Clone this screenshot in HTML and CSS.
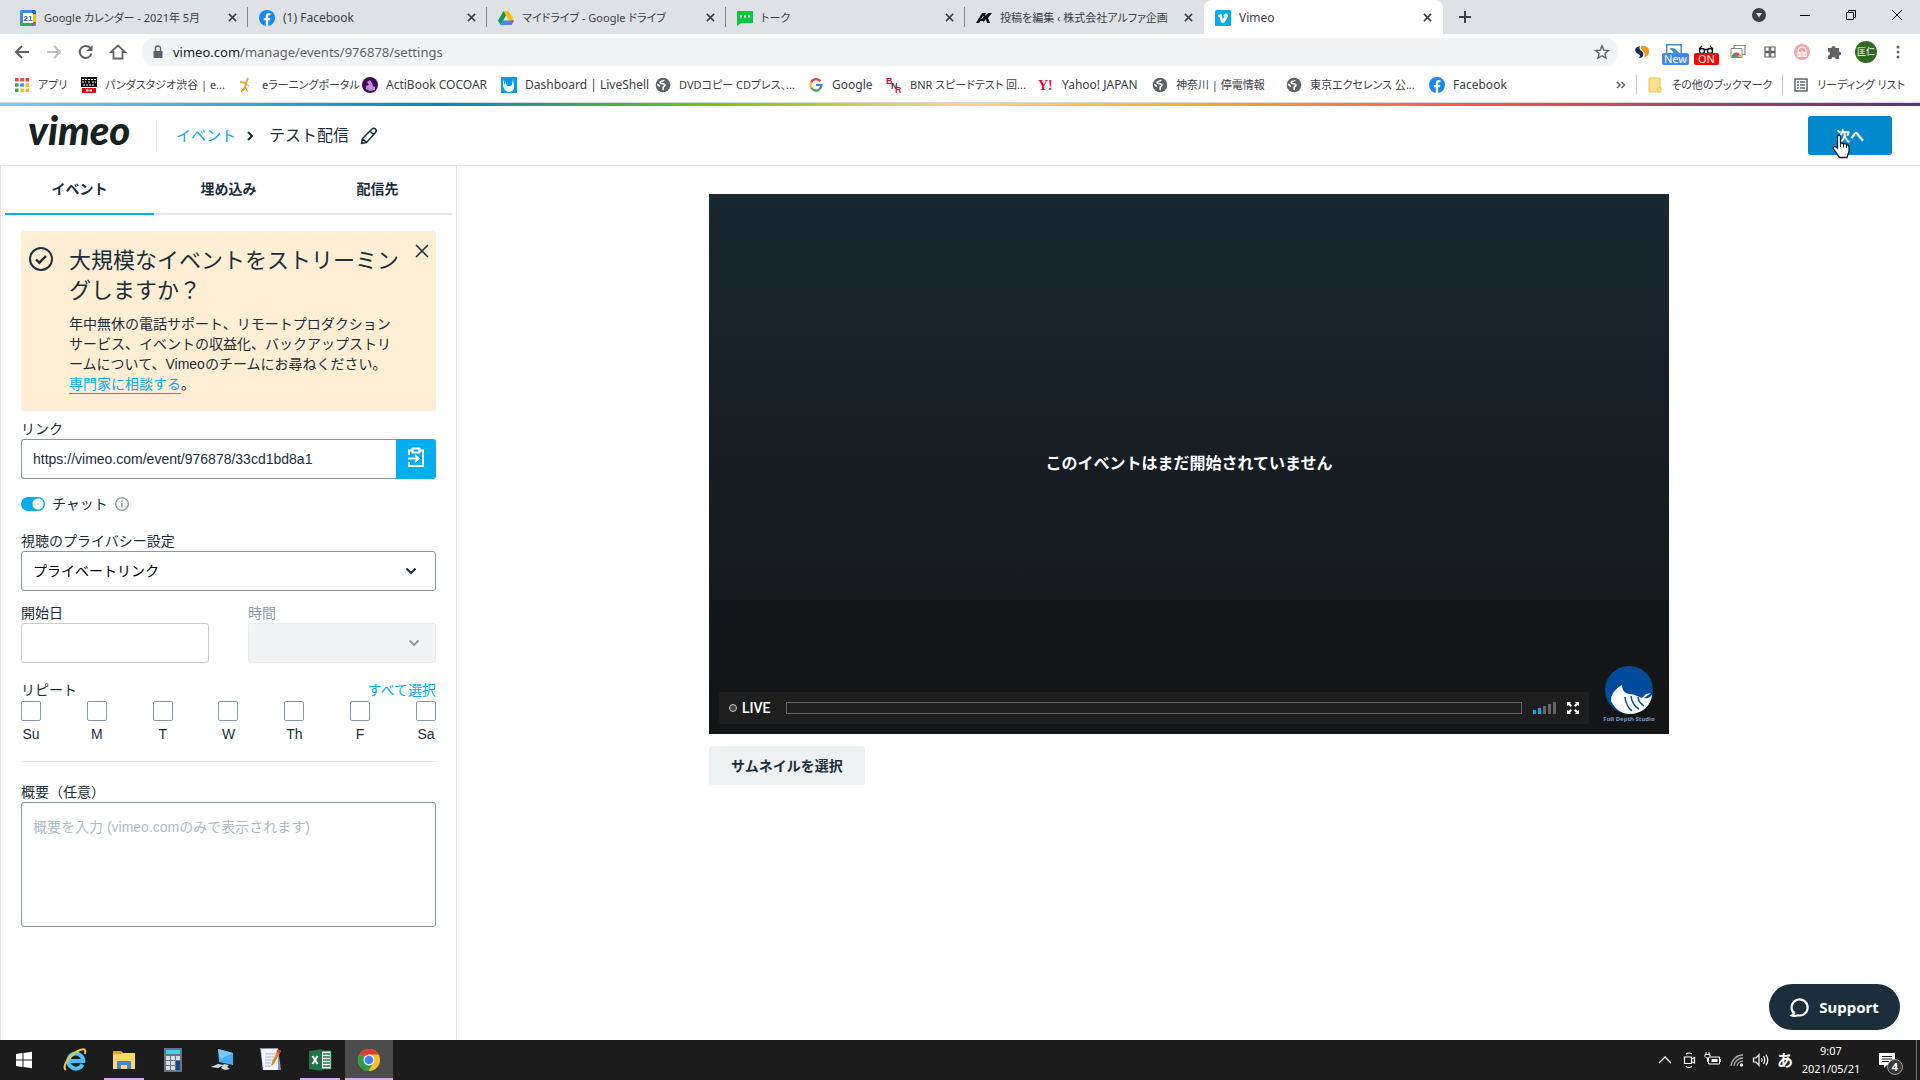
FILE: index.html
```html
<!DOCTYPE html>
<html lang="ja">
<head>
<meta charset="utf-8">
<title>Vimeo</title>
<link rel="stylesheet" href="styles.css">
</head>
<body>
<svg class="defs" aria-hidden="true">
  <symbol id="x" viewBox="0 0 10 10"><path d="M1 1l8 8M9 1L1 9" fill="none" stroke="currentColor" stroke-width="1.7"/></symbol>
  <symbol id="fb" viewBox="0 0 16 16"><circle cx="8" cy="8" r="8" fill="#1287f5"/><path d="M6.8 16V10.300H4.800V8h2V6.300c0-2 1.200-3.200 3-3.200l1.700.2v1.900h-1c-1 0-1.300.6-1.300 1.200V8h2.200l-.4 2.300H9.200V16z" fill="#fff"/></symbol>
  <symbol id="globe" viewBox="0 0 16 16"><circle cx="8" cy="8" r="7.300" fill="#5f6368"/><path d="M9 3c-.6 1.600-3.600 1-4 2.500.1 1.600 4.500.7 5 2.500.3 1.200-1.600 1.200-1.800 2.300-.1 1 .3 1.600-.2 2.700M2 7.500c1.500.2 2.300.8 2.400 2.200" fill="none" stroke="#fff" stroke-width="1.600"/></symbol>
  <symbol id="chev" viewBox="0 0 12 8"><path d="M1.500 1.500L6 6l4.500-4.500" fill="none" stroke="currentColor" stroke-width="2"/></symbol>
</svg>

<header class="chrome">
  <nav class="tabstrip" aria-label="タブ">
    <div class="tab"><svg viewBox="0 0 16 16"><rect width="16" height="16" rx="1.500" fill="#4285f4"/><path d="M0 12h12v4H1.500L0 14.500z" fill="#34a853"/><path d="M12 4h4v8h-4z" fill="#fbbc04"/><path d="M12 12h4l-4 4z" fill="#ea4335"/><path d="M12 0h2.500L16 1.500V4h-4z" fill="#1967d2"/><rect x="3" y="3" width="10" height="10" fill="#fff"/><text x="8" y="11" text-anchor="middle" class="cal-num">21</text></svg><span class="jp">Google カレンダー - 2021年 5月</span><button aria-label="閉じる"><svg><use href="#x"/></svg></button></div>
    <div class="tab"><svg><use href="#fb"/></svg><span>(1) Facebook</span><button aria-label="閉じる"><svg><use href="#x"/></svg></button></div>
    <div class="tab"><svg viewBox="0 0 16 16"><path d="M5.500 1h5L16 10.500h-5z" fill="#fbbc04"/><path d="M5.500 1L0 10.500 2.600 15 8 5.500z" fill="#0f9d58"/><path d="M5.200 10.500H16L13.400 15H2.600z" fill="#4285f4"/><path d="M12.800 10.500H16L13.400 15z" fill="#ea4335"/></svg><span class="jp">マイドライブ - Google ドライブ</span><button aria-label="閉じる"><svg><use href="#x"/></svg></button></div>
    <div class="tab"><svg viewBox="0 0 16 16"><path d="M0 1h16v12H4l-4 3z" fill="#06c93c"/><path d="M3 5.500h2v2H3zM7 5.500h2v2H7zM11 5.500h2v2h-2z" fill="#fff"/></svg><span class="jp">トーク</span><button aria-label="閉じる"><svg><use href="#x"/></svg></button></div>
    <div class="tab"><svg viewBox="0 0 16 16"><path d="M0 13L6 3h4l-1 3 3-3h4l-4 5 2 5h-3l-1-4-3 4H7l.5-2h-3L3 13z" fill="#111"/><path d="M5.500 9l2-3" stroke="#dee1e6"/></svg><span class="jp">投稿を編集 ‹ 株式会社アルファ企画</span><button aria-label="閉じる"><svg><use href="#x"/></svg></button></div>
    <div class="tab active"><svg viewBox="0 0 16 16"><rect width="16" height="16" rx="1.500" fill="#00adef"/><path d="M3 5.500c2-2 3.500-2.300 4 0l.7 3.500C9 8 9.600 6 8.500 6c.5-2 2-2.800 3.500-2.300C14.500 5 11 12 8 13c-2 .4-2.300-1.500-3-5-.3-1.300-.7-1.500-1.500-1z" fill="#fff"/></svg><span>Vimeo</span><button aria-label="閉じる"><svg><use href="#x"/></svg></button></div>
    <button class="newtab" aria-label="新しいタブ"><svg viewBox="0 0 12 12"><path d="M6 0v12M0 6h12" stroke="#3c4043" stroke-width="2"/></svg></button>
    <div class="winctl">
      <button aria-label="タブを検索"><svg viewBox="0 0 14 14"><circle cx="7" cy="7" r="7" fill="#3c4043"/><path d="M4 5h6L7 9.500z" fill="#dee1e6"/></svg></button>
      <button aria-label="最小化"><svg viewBox="0 0 14 14"><path d="M2 7.500h10" stroke="#000"/></svg></button>
      <button aria-label="元に戻す"><svg viewBox="0 0 14 14"><path d="M2.500 4.500h7v7h-7zM4.500 4.500v-2h7v7h-2" fill="none" stroke="#000"/></svg></button>
      <button aria-label="閉じる"><svg viewBox="0 0 14 14"><path d="M2 2l10 10M12 2L2 12" stroke="#000"/></svg></button>
    </div>
  </nav>

  <div class="toolbar">
    <button aria-label="戻る"><svg viewBox="0 0 16 16"><path d="M15 8H2M8 2L2 8l6 6" fill="none" stroke="#5f6368" stroke-width="2"/></svg></button>
    <button aria-label="進む"><svg viewBox="0 0 16 16"><path d="M1 8h13M8 2l6 6-6 6" fill="none" stroke="#bcbfc3" stroke-width="2"/></svg></button>
    <button aria-label="再読み込み"><svg viewBox="0 0 16 16"><path d="M13.500 9.500a6 6 0 1 1-1.300-5.600L13.500 5" fill="none" stroke="#5f6368" stroke-width="2"/><path d="M14.500 1v6h-6z" fill="#5f6368"/></svg></button>
    <button aria-label="ホーム"><svg viewBox="0 0 16 16"><path d="M1 8l7-6.500L15 8h-2.500v6.500h-9V8z" fill="none" stroke="#5f6368" stroke-width="1.800"/></svg></button>
    <div class="omnibox">
      <svg viewBox="0 0 16 16"><path d="M3.500 7h9v7h-9z" fill="#5f6368"/><path d="M5.500 7V4.500a2.500 2.500 0 0 1 5 0V7" fill="none" stroke="#5f6368" stroke-width="1.500"/></svg>
      <span class="url"><b>vimeo.com</b>/manage/events/976878/settings</span>
      <svg class="star" viewBox="0 0 16 16"><path d="M8 1.800l1.800 4.300 4.700.4-3.600 3 1.100 4.600L8 11.700 4 14.100l1.100-4.600-3.600-3 4.700-.4z" fill="none" stroke="#5f6368" stroke-width="1.400"/></svg>
    </div>
    <div class="exts">
      <svg viewBox="0 0 16 16"><path d="M6 2C2 3 0 5 2 8c1 2 4 2 4 4l-1 2c3 0 5-2 4-5S4 6 6 2z" fill="#1b2a56"/><path d="M7 2c5-1 9 2 8 7-1 3-3 4-5 4 2-4 0-5-2-7-1-1-1.500-3-1-4z" fill="#f7941d"/></svg>
      <div class="ext"><svg viewBox="0 0 16 16"><path d="M0 0h16v14H0z" fill="#4b8bbd"/><path d="M1.500 1.500h13v10h-13z" fill="#fff"/><path d="M3 5c5-3 7 1 11 4v2H8C7 7 6 6 3 5z" fill="#3d8ec9"/></svg><em class="new">New</em></div>
      <div class="ext"><svg viewBox="0 0 16 16"><path d="M1 5L4 2M15 5l-3-3M1 5.500h14" fill="none" stroke="#111" stroke-width="1.300"/><circle cx="4" cy="7" r="2.500" fill="#fff" stroke="#111" stroke-width="1.400"/><circle cx="12" cy="7" r="2.500" fill="#fff" stroke="#111" stroke-width="1.400"/></svg><em class="on">ON</em></div>
      <svg viewBox="0 0 16 16"><path d="M4 4V1.500h11v9h-3" fill="none" stroke="#888" stroke-width="1.200"/><path d="M1 4.500h11v9H1z" fill="#fff" stroke="#888"/><path d="M2 13a4.500 4.500 0 0 1 9 0z" fill="#ea4335"/><path d="M2 13a4.500 4.500 0 0 1 2.200-3.900L6.500 13z" fill="#34a853"/><path d="M11 13a4.500 4.500 0 0 0-1-3L6.500 13z" fill="#fbbc04"/><circle cx="6.500" cy="12" r="1.800" fill="#4285f4"/></svg>
      <svg viewBox="0 0 16 16"><path d="M3 3h4.300v4.300H3zM8.700 3H13v4.300H8.700zM3 8.700h4.300V13H3zM8.700 8.700H13V13H8.700z" fill="none" stroke="#5f6368" stroke-width="1.200"/></svg>
      <svg viewBox="0 0 16 16"><circle cx="8" cy="8" r="8" fill="#f3a6a6"/><path d="M4 9V7a4 4 0 0 1 8 0v2M4 8.500h2v4H4zM10 8.500h2v4h-2zM8 7v6" fill="none" stroke="#fff" stroke-width="1.200"/></svg>
      <svg viewBox="0 0 16 16"><path d="M2 4h3.500a2 2 0 1 1 4 0H13v3.500a2 2 0 1 1 0 4V15H9.500a2 2 0 1 0-4 0H2v-3.500a2 2 0 1 0 0-4z" fill="#5f6368"/></svg>
      <span class="avatar">匡仁</span>
      <svg viewBox="0 0 16 16"><circle cx="8" cy="3" r="1.500" fill="#5f6368"/><circle cx="8" cy="8" r="1.500" fill="#5f6368"/><circle cx="8" cy="13" r="1.500" fill="#5f6368"/></svg>
    </div>
  </div>

  <nav class="bookbar" aria-label="ブックマーク">
    <div class="bookmarks">
      <a href="#"><svg viewBox="0 0 16 16"><path d="M1 1h3.500v3.500H1zM6.300 1h3.500v3.500H6.300zM11.500 1H15v3.500h-3.500z" fill="#ea4335"/><path d="M1 6.300h3.500v3.500H1z" fill="#34a853"/><path d="M6.300 6.300h3.500v3.500H6.300z" fill="#4285f4"/><path d="M11.500 6.300H15v3.500h-3.500z" fill="#fbbc04"/><path d="M1 11.500h3.500V15H1z" fill="#34a853"/><path d="M6.300 11.500h3.500V15H6.300zM11.500 11.500H15V15h-3.500z" fill="#fbbc04"/></svg><span class="jp">アプリ</span></a>
      <a href="#"><svg viewBox="0 0 16 16"><path d="M0 0h16v10H0z" fill="#111"/><path d="M1 2.500h14M1 5h4M7 5h2M11 5h4M2 8h12" stroke="#fff" stroke-width="1.200" stroke-dasharray="2 1"/><path d="M1 11h14v5H1z" fill="#e60012"/><path d="M5 13.500h6" stroke="#fff" stroke-width="2" stroke-dasharray="2.500 1"/></svg><span class="jp">パンダスタジオ渋谷 | e...</span></a>
      <a href="#"><svg viewBox="0 0 16 16"><path d="M10 1L8 6 2 5M8 6l-1 5-4 4" fill="none" stroke="#eba937" stroke-width="2"/><path d="M8 7l3 2M7 10l3 5" fill="none" stroke="#d9822b"/></svg><span class="jp">eラーニングポータル</span></a>
      <a href="#"><svg viewBox="0 0 16 16"><circle cx="8" cy="8" r="8" fill="#3f0d55"/><path d="M4 12V9l3-1-2-3 3-2 2 3 1 3 2 1v3l-5 1z" fill="#c58be0"/></svg><span>ActiBook COCOAR</span></a>
      <a href="#"><svg viewBox="0 0 16 16"><path d="M0 0h16v16H0z" fill="#0a9be8"/><path d="M2 2l2 7V4l2 5h3l2-1 1-6 1 6v3q-1 4-5 4t-6-6z" fill="#fff"/></svg><span>Dashboard | LiveShell</span></a>
      <a href="#"><svg><use href="#globe"/></svg><span class="jp">DVDコピー CDプレス、...</span></a>
      <a href="#"><svg viewBox="0 0 16 16"><path d="M12.500 4.200A5.500 5.500 0 0 0 3.200 5.300" fill="none" stroke="#ea4335" stroke-width="2.200"/><path d="M3.200 5.300a6 6 0 0 0 0 5.400" fill="none" stroke="#fbbc04" stroke-width="2.200"/><path d="M3.200 10.700A5.500 5.500 0 0 0 11.500 12.300" fill="none" stroke="#34a853" stroke-width="2.200"/><path d="M8 8h5.500a6 6 0 0 1-2 4.300" fill="none" stroke="#4285f4" stroke-width="2.200"/></svg><span>Google</span></a>
      <a href="#"><svg viewBox="0 0 16 16" class="bnr"><text x="0" y="7" fill="#c1123b">B</text><text x="5" y="12" fill="#333">N</text><text x="9" y="16" fill="#c1123b">R</text></svg><span class="jp">BNR スピードテスト 回...</span></a>
      <a href="#"><svg viewBox="0 0 16 16" class="yj"><text x="0" y="13" fill="#f03">Y!</text></svg><span>Yahoo! JAPAN</span></a>
      <a href="#"><svg><use href="#globe"/></svg><span class="jp">神奈川 | 停電情報</span></a>
      <a href="#"><svg><use href="#globe"/></svg><span class="jp">東京エクセレンス 公...</span></a>
      <a href="#"><svg><use href="#fb"/></svg><span>Facebook</span></a>
    </div>
    <div class="bookmore">
      <button aria-label="その他"><svg viewBox="0 0 10 8"><path d="M1 1l3 3-3 3M5.500 1l3 3-3 3" fill="none" stroke="#5f6368" stroke-width="1.500"/></svg></button>
      <a href="#"><svg viewBox="0 0 16 16"><path d="M2 1h11v14H2z" fill="#fde08d" stroke="#e8c45a"/><path d="M11 10h3v5h-3z" fill="#fde08d" stroke="#e8c45a"/></svg><span class="jp">その他のブックマーク</span></a>
      <a href="#"><svg viewBox="0 0 16 16"><path d="M2 2h12v12H2z" fill="none" stroke="#5f6368" stroke-width="1.500"/><path d="M4 5h2M7 5h5M4 8h2M7 8h5M4 11h2M7 11h5" stroke="#5f6368" stroke-width="1.400"/></svg><span class="jp">リーディング リスト</span></a>
    </div>
  </nav>
</header>

<div class="rainbow"></div>
<header class="topbar">
  <a class="logo" href="#">vimeo</a>
  <nav class="crumbs" aria-label="パンくず">
    <a href="#">イベント</a>
    <svg class="crumb-sep" viewBox="0 0 8 10"><path d="M2 1l4 4-4 4" fill="none" stroke="#1a2e3b" stroke-width="2"/></svg>
    <h1>テスト配信</h1>
    <button aria-label="編集"><svg viewBox="0 0 18 18"><path d="M1.500 16.500l1-5L12 2q2-1.500 3.500 0t0 3.500L6.500 15.500zM10 4l4 4M2.500 11.500l4 4" fill="none" stroke="#1a2e3b" stroke-width="1.500" stroke-linejoin="round"/></svg></button>
  </nav>
  <div class="next">
    <button>次へ</button>
    <svg class="cursor" viewBox="0 0 18 25"><path d="M5.500 14V3q0-2 1.500-2t1.500 2v6l5 .8q3.500.5 3.500 3.500v4l-2 6.200H7.500l-5-7q-2-3-.5-3.800T5.500 14z" fill="#fff" stroke="#10202c" stroke-width="1.300"/><path d="M8.500 9v4M11.500 9.500v4M14.500 10v4" stroke="#10202c"/></svg>
  </div>
</header>

<main class="main">
  <aside class="side">
    <nav class="sidetabs"><a class="on" href="#">イベント</a><a href="#">埋め込み</a><a href="#">配信先</a></nav>
    <form class="form">
      <section class="notice">
        <svg class="check" viewBox="0 0 24 24"><circle cx="12" cy="12" r="11" fill="none" stroke="#1a2e3b" stroke-width="2"/><path d="M7 12.500l3.300 3.200L17 9" fill="none" stroke="#1a2e3b" stroke-width="2.400"/></svg>
        <div class="notice-text">
          <h2>大規模なイベントをストリーミングしますか？</h2>
          <p>年中無休の電話サポート、リモートプロダクションサービス、イベントの収益化、バックアップストリームについて、Vimeoのチームにお尋ねください。 <a href="#">専門家に相談する</a>。</p>
        </div>
        <button type="button" class="notice-close" aria-label="閉じる"><svg viewBox="0 0 12 12"><path d="M0 0l12 12M12 0L0 12" stroke="#1a2e3b" stroke-width="1.500"/></svg></button>
      </section>

      <label for="link">リンク</label>
      <div class="copy"><input id="link" type="text" value="https://vimeo.com/event/976878/33cd1bd8a1"><button type="button" aria-label="コピー"><svg viewBox="0 0 16 20"><path d="M1 8V3.500h3M12 3.500h3V19H1v-4" fill="none" stroke="#fff" stroke-width="2"/><path d="M4.500 1.500h7v4h-7z" fill="none" stroke="#fff" stroke-width="2" stroke-linejoin="round"/><path d="M0 11.500h10M7 8l3.700 3.500L7 15" fill="none" stroke="#fff" stroke-width="1.800"/></svg></button></div>

      <div class="chat">
        <input id="chat" type="checkbox" checked><label for="chat">チャット</label>
        <svg viewBox="0 0 14 14"><circle cx="7" cy="7" r="6.300" fill="none" stroke="#8699a6" stroke-width="1.300"/><path d="M7 6v4.500M7 3.500v1.400" stroke="#8699a6" stroke-width="1.500"/></svg>
      </div>

      <label for="privacy">視聴のプライバシー設定</label>
      <div class="pick"><select id="privacy"><option>プライベートリンク</option></select><svg><use href="#chev"/></svg></div>

      <div class="when">
        <div><label for="date">開始日</label><input id="date" type="text"></div>
        <div class="off"><label for="time">時間</label><div class="pick"><select id="time" disabled><option></option></select><svg><use href="#chev"/></svg></div></div>
      </div>

      <div class="repeat"><span>リピート</span><a href="#">すべて選択</a></div>
      <div class="days">
        <label><input type="checkbox">Su</label><label><input type="checkbox">M</label><label><input type="checkbox">T</label><label><input type="checkbox">W</label><label><input type="checkbox">Th</label><label><input type="checkbox">F</label><label><input type="checkbox">Sa</label>
      </div>
      <hr>
      <label for="desc">概要（任意）</label>
      <textarea id="desc" placeholder="概要を入力 (vimeo.comのみで表示されます)"></textarea>
    </form>
  </aside>

  <section class="stage">
    <div class="player">
      <p>このイベントはまだ開始されていません</p>
      <div class="playrow">
        <div class="controls">
          <span class="live"><i></i>LIVE</span>
          <div class="track"></div>
          <svg class="vol" viewBox="0 0 23 12"><path d="M0 8h3v4H0zM5 6h3v6H5z" fill="#00adef"/><path d="M10 4h3v8h-3zM15 2h3v10h-3zM20 0h3v12h-3z" fill="#666"/></svg>
          <svg class="full" viewBox="0 0 12 12"><path d="M0 0h4L3 1.500l2 2L3.500 5l-2-2L0 4zM12 0v4l-1.500-1-2 2L7 3.500l2-2L8 0zM0 12V8l1.500 1 2-2L5 8.500l-2 2L4 12zM12 12H8l1-1.500-2-2L8.500 7l2 2L12 8z" fill="#fff"/></svg>
        </div>
        <div class="brand">
          <svg viewBox="0 0 48 48"><circle cx="24" cy="24" r="24" fill="#004b9b"/><path d="M17 19C10 23 6 28 6 35c4 8 11 13 18 13 13 0 22-8 23-19-3 3-5 4-8 3l7-5q-5 1-5 1-2 2-4 4c-3-1-8-4-12-4-5 0-8-4-8-9z" fill="#fff"/><path d="M20 31q1 9 7 14M26 30q1 9 8 13M33 31q0 5 6 9" fill="none" stroke="#004b9b" stroke-width="1.500"/></svg>
          <span>Full Depth Studio</span>
        </div>
      </div>
    </div>
    <button class="thumb">サムネイルを選択</button>
  </section>
  <button class="support"><svg viewBox="0 0 20 20"><path d="M5 17a8 8 0 1 1 3 1.300Q5 19.500 2 18.500 4.500 17 3.500 14.500" fill="none" stroke="#fff" stroke-width="2.200"/></svg>Support</button>
</main>

<footer class="taskbar">
  <div class="apps">
    <button class="start" aria-label="スタート"><svg viewBox="0 0 24 24"><path d="M4 6l6.500-1v6.500H4zM11.500 4.900L20 3.700v7.800h-8.500zM4 12.500h6.500V19L4 18zM11.500 12.500H20v7.800l-8.500-1.200z" fill="#fff"/></svg></button>
    <button aria-label="Internet Explorer"><svg viewBox="0 0 24 24"><path d="M19.500 16.500a7.500 7.500 0 1 1 .8-3.500H7" fill="none" stroke="#4cc3f5" stroke-width="4"/><path d="M3 22C-2 19 7 6 17 2c5-2 6 0 5 4" fill="none" stroke="#f5c935" stroke-width="2"/></svg></button>
    <button class="open" aria-label="エクスプローラー"><svg viewBox="0 0 24 24"><path d="M1 3h8l2 2h12v16H1z" fill="#ffd766"/><path d="M1 3h8l1 3H1z" fill="#e5a100"/><path d="M5 13h14v8h-4v-4H9v4H5z" fill="#3b8ad0"/></svg></button>
    <button aria-label="電卓"><svg viewBox="0 0 24 24"><path d="M3 0h18v24H3z" fill="#687580"/><path d="M5 2h14v4H5z" fill="#3cd3f2"/><path d="M5 8h4v4H5zM10 8h4v4h-4zM15 8h4v4h-4zM5 13h4v4H5zM10 13h4v4h-4zM5 18h4v4H5zM10 18h4v4h-4z" fill="#d9dde1"/><path d="M15 13h4v9h-4z" fill="#124a8c"/></svg></button>
    <button aria-label="リモート"><svg viewBox="0 0 24 24"><path d="M8 1l15 4v12L9 14z" fill="#48aef3"/><path d="M8 1l15 4-13 6z" fill="#7dcbfa"/><path d="M14 16l5 1-2 2 3 2-5 1-4-2zM1 19l7-3 6 1-6 3z" fill="#d4d9de"/></svg></button>
    <button aria-label="メモ"><svg viewBox="0 0 24 24"><path d="M1 0h18l3 22H4z" fill="#8d93b5"/><path d="M2 1h17v21H4z" fill="#f3f4fd"/><path d="M6 6h10M6 9h9M6 12h8M6 15h6M6 18h6" stroke="#aab0dc"/><path d="M19 1l3 2-7 13-3 2 1-4z" fill="#d98a2b"/><path d="M19 1l3 2-1.500 2.500-3-2z" fill="#d33"/></svg></button>
    <button class="open" aria-label="Excel"><svg viewBox="0 0 24 24"><path d="M12 3h11v18H12z" fill="#fff" stroke="#217346"/><path d="M15 6h7M15 9h7M15 12h7M15 15h7M15 18h7" stroke="#217346" stroke-width="1.500"/><path d="M1 3l13-2v22L1 21z" fill="#217346"/><path d="M4.500 8l5 8M9.500 8l-5 8" stroke="#fff" stroke-width="2"/></svg></button>
    <button class="open current" aria-label="Chrome"><svg viewBox="0 0 24 24"><circle cx="12" cy="12" r="11" fill="#fbc02d"/><path d="M12 12L2.500 6.500A11 11 0 0 1 21.500 6.500H12z" fill="#e33b2e"/><path d="M2.500 6.500A11 11 0 0 0 11.500 23l5-8.500L12 12z" fill="#2a9d4a"/><circle cx="12" cy="12" r="5.500" fill="#fff"/><circle cx="12" cy="12" r="4.300" fill="#4285f4"/></svg></button>
  </div>
  <div class="tray">
    <svg viewBox="0 0 16 16"><path d="M2 11l6-6 6 6" fill="none" stroke="#fff" stroke-width="1.300"/></svg>
    <svg viewBox="0 0 16 16"><path d="M3.500 5h7v6.500h-7zM10.500 7l3-1.500v5.500l-3-1.500M5 2q3-2 6 0M5 14.500q3 2 6 0" fill="none" stroke="#fff" stroke-width="1.200"/></svg>
    <svg viewBox="0 0 16 16"><path d="M3.500 5h11v7h-11z" fill="none" stroke="#fff"/><path d="M6.500 7h6v3h-6zM15 7h1v3h-1z" fill="#fff"/><path d="M0 2.500h5v2L3.500 6h-2L0 4.500zM1 0v2M4 0v2M2.500 6v4" fill="#1c1c1c" stroke="#fff"/></svg>
    <svg viewBox="0 0 16 16"><path d="M2 14A12 12 0 0 1 14 3M5 14a9 9 0 0 1 9-8M8 14a6 6 0 0 1 6-5" fill="none" stroke="#aaa" stroke-width="1.300"/><circle cx="12.500" cy="13" r="1.700" fill="#fff"/></svg>
    <svg viewBox="0 0 16 16"><path d="M.5 6h2.500l3-3.500v11L3 10H.5zM8.500 6q1.300 2 0 4M10.500 4q2.500 4 0 8M12.800 2.500q4 5.500 0 11" fill="none" stroke="#fff" stroke-width="1.200"/></svg>
    <span class="ime">あ</span>
    <time>9:07<br>2021/05/21</time>
    <div class="notif"><svg viewBox="0 0 16 16"><path d="M0 1h16v12H8l-3 3v-3H0z" fill="#fff"/><path d="M3 4.500h10M3 7h10M3 9.500h7" stroke="#1c1c1c"/></svg><em>4</em></div>
  </div>
</footer>
</body>
</html>
```

FILE: styles.css
```css
* { box-sizing: border-box; }
body {
  margin: 0;
  min-height: 100vh;
  display: flex;
  flex-direction: column;
  background: #fff;
  color: #1a2e3b;
  font: 14px/20px "Liberation Sans", "Noto Sans CJK JP", sans-serif;
}
button { margin: 0; padding: 0; border: 0; background: none; font: inherit; color: inherit; display: flex; align-items: center; justify-content: center; flex: none; }
a { color: inherit; text-decoration: none; }
svg { flex: none; display: block; overflow: visible; }
.defs { position: absolute; width: 0; height: 0; }

/* browser frame */
.chrome { font: 12px/16px "Noto Sans", "Noto Sans CJK JP", sans-serif; font-feature-settings: "palt"; color: #3c4043; border-bottom: 1px solid #d5d8dd; }
.jp { font-size: 11px; }
.tabstrip { display: flex; height: 34px; background: #dee1e6; padding-left: 9px; }
.tab { width: 239px; display: flex; align-items: center; gap: 8px; padding: 1px 11px 0 11px; position: relative; }
.tab > svg { width: 16px; height: 16px; }
.tab span { flex: 1; white-space: nowrap; overflow: hidden; }
.tab button svg { width: 9px; height: 9px; }
.tab:not(.active)::after { content: ""; position: absolute; right: 0; top: 7px; height: 20px; width: 1px; background: #83878d; }
.tab:nth-child(5)::after { display: none; }
.tab.active { background: #fff; border-radius: 8px 8px 0 0; }
.cal-num { font: bold 8px "Liberation Sans", sans-serif; fill: #1967d2; }
.newtab { width: 44px; }
.newtab svg { width: 12px; height: 12px; }
.winctl { margin-left: auto; display: flex; padding-bottom: 4px; }
.winctl button { width: 46px; }
.winctl svg { width: 14px; height: 14px; }

.toolbar { display: flex; align-items: center; height: 36px; padding: 0 14px; gap: 16px; }
.toolbar svg { width: 16px; height: 16px; }
.omnibox { flex: 1; height: 28px; border-radius: 14px; background: #f1f3f4; display: flex; align-items: center; gap: 7px; padding: 0 8px; font-size: 13px; color: #5f6368; }
.omnibox b { font-weight: normal; color: #202124; }
.omnibox .star { margin-left: auto; }
.exts { display: flex; align-items: center; gap: 16px; }
.ext { position: relative; }
.ext em { position: absolute; left: -4px; top: 9px; padding: 0 2px; border-radius: 2px; color: #fff; font: 11px/12px "Noto Sans", sans-serif; }
.ext .new { background: #4285f4; }
.ext .on { background: #f00; padding: 0 4px; }
.avatar { width: 22px; height: 22px; border-radius: 50%; background: #33691e; color: #fff; font-size: 9px; line-height: 22px; text-align: center; margin: 0 -3px; }

.bookbar { display: flex; justify-content: space-between; height: 32px; padding: 0 15px 3px 14px; }
.bookmarks { display: grid; grid-template-columns: 67px 157px 124px 139px 154px 153px 78px 152px 114px 134px 143px 80px; }
.bookbar a { display: flex; align-items: center; gap: 8px; white-space: nowrap; }
.bookbar a svg { width: 16px; height: 16px; }
.bnr { font: bold 9px "Liberation Sans", sans-serif; }
.yj { font: bold 14px "Liberation Serif", serif; }
.bookmore { display: flex; align-items: center; gap: 10px; }
.bookmore button svg { width: 10px; height: 8px; }
.bookmore a { border-left: 1px solid #c4c7cb; padding-left: 10px; height: 20px; }

/* vimeo header */
.rainbow { height: 3px; background: linear-gradient(90deg, #72cff8, #0088cc 23%, #7ac400 37%, #fdd584 50%, #fcab24 62%, #ff5252 77%, #4f3674); }
.topbar { display: flex; align-items: center; height: 60px; padding: 0 28px; border-bottom: 1px solid #e3e8e9; }
.logo { width: 129px; height: 32px; border-right: 1px solid #e3e8e9; font: italic 900 40px/20px Lato, sans-serif; color: #162221; }
.crumbs { display: flex; align-items: center; font-size: 16px; padding-left: 19px; }
.crumbs a { color: #00adef; font-size: 15px; }
.crumb-sep { width: 8px; height: 10px; margin: 0 15px 0 10px; }
.crumbs h1 { margin: 0; font-size: 16px; font-weight: normal; }
.crumbs button { margin-left: 11px; }
.crumbs button svg { width: 18px; height: 18px; }
.next { margin-left: auto; position: relative; }
.next button { width: 84px; height: 39px; border-radius: 3px; background: #0088cc; color: #fff; font-weight: bold; }
.cursor { position: absolute; left: 24px; top: 18px; width: 18px; height: 25px; }

/* layout */
.main { flex: 1; display: flex; position: relative; }
.side { width: 457px; flex: none; border: 1px solid #e3e8e9; border-width: 0 1px; }
.sidetabs { display: flex; margin: 0 4px; }
.sidetabs a { flex: 1; height: 49px; padding-top: 13px; text-align: center; font-weight: bold; border-bottom: 2px solid #e3e8e9; }
.sidetabs a.on { border-color: #00adef; }
.form { padding: 16px 20px; display: flex; flex-direction: column; }
.notice { display: flex; align-items: flex-start; min-height: 180px; padding: 14px 8px; border-radius: 3px; background: #ffedd4; margin-bottom: 8px; }
.check { width: 24px; height: 24px; margin: 2px 16px 0 0; }
.notice-text { width: 333px; padding-top: 1px; line-break: loose; }
.notice h2 { margin: 0 0 8px; font-size: 22px; line-height: 30px; font-weight: normal; }
.notice p { margin: 0; }
.notice p a { display: inline-block; color: #00adef; line-height: 18px; border-bottom: 1px solid #00adef; }
.notice-close { margin-left: auto; }
.notice-close svg { width: 12px; height: 12px; }
input, select, textarea { font: inherit; color: #1a2e3b; border: 1px solid #8699a6; border-radius: 3px; background: #fff; margin: 0; padding: 0 11px; appearance: none; outline: 0; }
input[type=text], select { width: 100%; height: 40px; display: block; }
.copy { display: flex; }
.copy input { flex: 1; border-radius: 3px 0 0 3px; border-right: 0; }
.copy button { width: 40px; background: #00adef; border-radius: 0 3px 3px 0; padding-bottom: 4px; }
.copy svg { width: 16px; height: 20px; }
.chat { display: flex; align-items: center; gap: 7px; margin: 15px 0 17px; }
.chat input { width: 24px; height: 14px; border: 0; border-radius: 7px; padding: 0; background: radial-gradient(circle at 17px 7px, #fff 5px, #00adef 6px); }
.chat svg { width: 14px; height: 14px; }
.pick { position: relative; }
.pick svg { position: absolute; right: 19px; top: 16px; width: 12px; height: 8px; }
.pick select { color: #000; opacity: 1; }
.when { display: grid; grid-template-columns: 188px 188px; justify-content: space-between; margin: 12px 0 17px; }
.when input { border-color: #ccc; }
.off { color: #8699a6; }
.off select { background: #f2f4f6; border-color: #e8ecee; }
.off .pick svg { right: 16px; }
.repeat { display: flex; justify-content: space-between; }
.repeat a { color: #00adef; }
.days { display: flex; justify-content: space-between; margin-top: 1px; }
.days label { width: 20px; display: flex; flex-direction: column; align-items: center; gap: 3px; }
.days input { width: 20px; height: 20px; padding: 0; border-radius: 2px; }
hr { width: 100%; margin: 17px 0 20px; border: 0; border-top: 1px solid #e3e8e9; }
textarea { height: 125px; padding: 14px 11px; resize: none; display: block; }
textarea::placeholder { color: #aebcc5; }

.stage { flex: 1; padding: 28px 251px 0 252px; display: flex; flex-direction: column; align-items: flex-start; gap: 12px; }
.player { width: 100%; aspect-ratio: 16 / 9; display: flex; flex-direction: column; justify-content: flex-end; background: linear-gradient(#1a2831, #141517 92%); color: #fff; }
.player p { margin: auto; padding-top: 68px; font-size: 16px; font-weight: bold; }
.playrow { display: flex; align-items: flex-end; padding: 0 12px 10px 10px; gap: 12px; }
.controls { flex: 1; height: 32px; display: flex; align-items: center; padding: 0 10px; background: #1e1e1e; border-radius: 2px; }
.live { display: flex; align-items: center; gap: 5px; font: 500 14px/20px Roboto, sans-serif; }
.live i { width: 8px; height: 8px; border: 1px solid #ccc; border-radius: 50%; background: #444; }
.track { flex: 1; height: 12px; border: 1px solid #666; margin: 0 11px 0 16px; }
.vol { width: 23px; height: 12px; margin-right: 11px; }
.full { width: 12px; height: 12px; }
.brand { width: 56px; display: flex; flex-direction: column; align-items: center; }
.brand svg { width: 48px; height: 48px; }
.brand span { font: bold 6px/10px "Noto Sans", sans-serif; color: #6f9cd8; white-space: nowrap; }
.thumb { height: 39px; padding: 0 22px; border-radius: 3px; background: #edf1f2; font-weight: bold; }
.support { position: absolute; right: 20px; bottom: 10px; width: 131px; height: 46px; gap: 9px; border-radius: 23px; background: #1a2e3b; color: #fff; font: bold 15px/20px "Noto Sans", sans-serif; }
.support svg { width: 20px; height: 20px; }

/* task bar */
.taskbar { display: flex; justify-content: space-between; height: 40px; background: #1c1c1c; color: #fff; font: 11px/18px "Noto Sans", "Noto Sans CJK JP", sans-serif; }
.apps { display: flex; gap: 1px; }
.apps button { width: 48px; position: relative; }
.apps .start { margin-right: 2px; }
.apps svg { width: 24px; height: 24px; }
.apps .open::after { content: ""; position: absolute; left: 4px; right: 4px; bottom: 0; height: 2px; background: #dba6f5; }
.apps .current { background: #4c4c4c; }
.apps .current::after { left: 0; right: 0; }
.tray { display: flex; align-items: center; gap: 8px; padding-right: 3px; }
.tray svg { width: 16px; height: 16px; }
.ime { font-size: 16px; font-weight: bold; }
.tray time { width: 60px; text-align: center; }
.notif { position: relative; padding: 0 21px 0 10px; border-right: 1px solid #777; height: 40px; display: flex; align-items: center; }
.notif em { position: absolute; left: 18px; top: 19px; width: 16px; height: 16px; border: 1px solid #999; border-radius: 50%; background: #3a3a3a; font: bold 11px/14px "Noto Sans", sans-serif; text-align: center; }
```
